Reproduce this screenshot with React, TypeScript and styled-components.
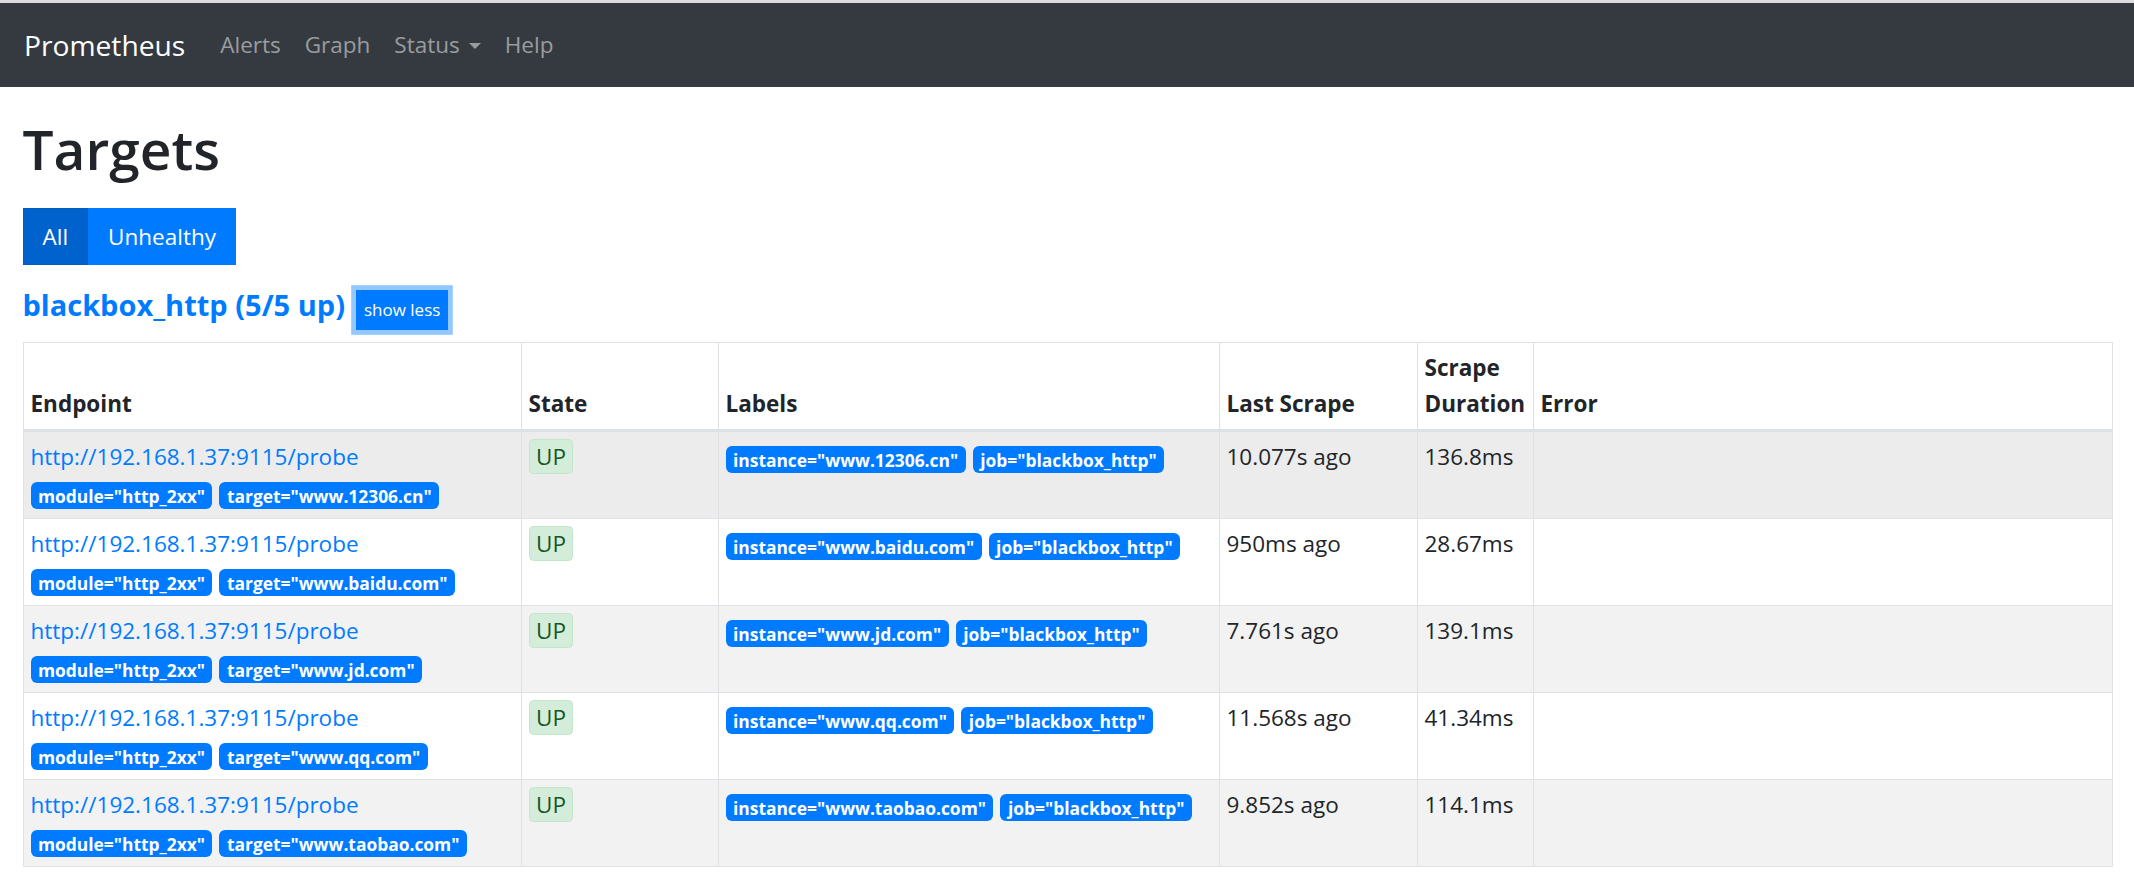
import styled, { createGlobalStyle } from 'styled-components';

type RowTone = 'hover' | 'stripe' | 'plain';

type Target = {
  target: string;
  lastScrape: string;
  duration: string;
};

const ENDPOINT = 'http://192.168.1.37:9115/probe';
const JOB = 'blackbox_http';

const TARGETS: Target[] = [
  { target: 'www.12306.cn', lastScrape: '10.077s ago', duration: '136.8ms' },
  { target: 'www.baidu.com', lastScrape: '950ms ago', duration: '28.67ms' },
  { target: 'www.jd.com', lastScrape: '7.761s ago', duration: '139.1ms' },
  { target: 'www.qq.com', lastScrape: '11.568s ago', duration: '41.34ms' },
  { target: 'www.taobao.com', lastScrape: '9.852s ago', duration: '114.1ms' },
];

const COLUMNS = [
  { title: 'Endpoint', width: 498 },
  { title: 'State', width: 197 },
  { title: 'Labels', width: 501 },
  { title: 'Last Scrape', width: 198 },
  { title: 'Scrape Duration', width: 116 },
  { title: 'Error', width: 579 },
];

const NAV_LINKS = ['Alerts', 'Graph', 'Status', 'Help'];

const toneFor = (i: number): RowTone => {
  if (i === 0) return 'hover';
  return i % 2 === 0 ? 'stripe' : 'plain';
};

const App = () => (
  <>
    <GlobalStyle />
    <TopStrip />
    <Navbar>
      <Brand>Prometheus</Brand>
      <NavList>
        {NAV_LINKS.map((link) => (
          <NavLink key={link}>
            {link}
            {link === 'Status' && <Caret />}
          </NavLink>
        ))}
      </NavList>
    </Navbar>
    <Main>
      <Title>Targets</Title>
      <ButtonGroup>
        <FilterButton active>All</FilterButton>
        <FilterButton>Unhealthy</FilterButton>
      </ButtonGroup>
      <PoolHeader>
        <PoolTitle>{JOB} (5/5 up)</PoolTitle>
        <ToggleButton>show less</ToggleButton>
      </PoolHeader>
      <Table>
        <colgroup>
          {COLUMNS.map((col) => (
            <col key={col.title} width={col.width} />
          ))}
        </colgroup>
        <thead>
          <tr>
            {COLUMNS.map((col) => (
              <Th key={col.title}>{col.title}</Th>
            ))}
          </tr>
        </thead>
        <tbody>
          {TARGETS.map((item, i) => (
            <Tr key={item.target} tone={toneFor(i)}>
              <Td>
                <EndpointLink>{ENDPOINT}</EndpointLink>
                <LabelList>
                  <Badge>module="http_2xx"</Badge>
                  <Badge>target="{item.target}"</Badge>
                </LabelList>
              </Td>
              <Td>
                <StateBadge>UP</StateBadge>
              </Td>
              <Td>
                <LabelList>
                  <Badge>instance="{item.target}"</Badge>
                  <Badge>job="{JOB}"</Badge>
                </LabelList>
              </Td>
              <Td>{item.lastScrape}</Td>
              <Td>{item.duration}</Td>
              <Td />
            </Tr>
          ))}
        </tbody>
      </Table>
    </Main>
  </>
);
export default App;

const GlobalStyle = createGlobalStyle`
  body {
    margin: 0;
    background: #fff;
    color: #212529;
    font-family: "Open Sans", "Noto Sans", sans-serif;
    font-size: 22.5px;
    line-height: 36px;
  }
  button {
    font-family: inherit;
  }
`;

const TopStrip = styled.div`
  height: 3px;
  background: #dcdcdc;
`;

const Navbar = styled.nav`
  display: flex;
  align-items: center;
  height: 84px;
  padding: 0 24px;
  box-sizing: border-box;
  background: #343a40;
`;

const Brand = styled.span`
  margin-right: 23px;

  font-size: 28.2px;
  line-height: 45px;
  color: #fff;
`;

const NavList = styled.div`
  display: flex;
  align-items: center;
`;

const NavLink = styled.span`
  display: flex;
  align-items: center;
  padding: 0 12px;

  color: rgba(255, 255, 255, 0.5);
  line-height: 36px;
`;

const Caret = styled.span`
  display: inline-block;
  margin-left: 9px;
  margin-top: 2px;
  border-top: 6px solid rgba(255, 255, 255, 0.5);
  border-left: 6px solid transparent;
  border-right: 6px solid transparent;
`;

const Main = styled.main`
  padding: 0 22.5px;
`;

const Title = styled.h1`
  margin: 26px 0 0;

  font-size: 55px;
  font-weight: 600;
  line-height: 72px;
  color: #212529;
`;

const ButtonGroup = styled.div`
  display: flex;
  margin-top: 23px;
`;

const FilterButton = styled.button<{ active?: boolean }>`
  height: 57px;
  padding: 0 19px;
  border: 1px solid ${({ active }) => (active ? '#005cbf' : '#007bff')};
  border-radius: 0;
  background: ${({ active }) => (active ? '#0062cc' : '#007bff')};

  font-size: 22.5px;
  line-height: 36px;
  color: #fff;
  cursor: pointer;
`;

const PoolHeader = styled.div`
  display: flex;
  align-items: baseline;
  margin-top: 22px;
`;

const PoolTitle = styled.h3`
  margin: 0;

  font-size: 29px;
  font-weight: 700;
  line-height: 36px;
  color: #007bff;
`;

const ToggleButton = styled.button`
  height: 40px;
  margin-left: 11px;
  padding: 0 7px;
  border: 1px solid #007bff;
  border-radius: 0;
  background: #007bff;
  box-shadow: 0 0 0 4.8px rgba(38, 143, 255, 0.5);

  font-size: 17px;
  line-height: 26px;
  color: #fff;
`;

const Table = styled.table`
  width: 100%;
  margin-top: 12px;
  border-collapse: collapse;
  table-layout: fixed;
  border: 1px solid #dee2e6;
`;

const Th = styled.th`
  padding: 7px;
  border: 1px solid #dee2e6;
  border-bottom: 3px solid #dee2e6;
  vertical-align: bottom;

  font-weight: 700;
  text-align: left;
  line-height: 36px;
  color: #212529;
`;

const Tr = styled.tr<{ tone: RowTone }>`
  background: ${({ tone }) => {
    if (tone === 'hover') return '#ececec';
    if (tone === 'stripe') return '#f2f2f2';
    return '#fff';
  }};
`;

const Td = styled.td`
  padding: 7px;
  border: 1px solid #dee2e6;
  vertical-align: top;

  line-height: 36px;
  color: #212529;
`;

const EndpointLink = styled.a`
  display: block;

  color: #007bff;
  text-decoration: none;
  cursor: pointer;
`;

const LabelList = styled.div`
  display: flex;
  flex-wrap: wrap;
  align-items: flex-start;
  gap: 7px;
  height: 36px;
  padding-top: 7px;
  box-sizing: border-box;
`;

const Badge = styled.span`
  display: inline-block;
  padding: 4.5px 7.5px;
  border-radius: 6px;
  background: #007bff;

  font-size: 17.4px;
  font-weight: 700;
  line-height: 18px;
  color: #fff;
  white-space: nowrap;
`;

const StateBadge = styled.span`
  display: inline-block;
  padding: 0 6.5px;
  border: 1px solid #c3e6cb;
  border-radius: 4.5px;
  background: #d4edda;

  line-height: 33px;
  color: #155724;
`;
